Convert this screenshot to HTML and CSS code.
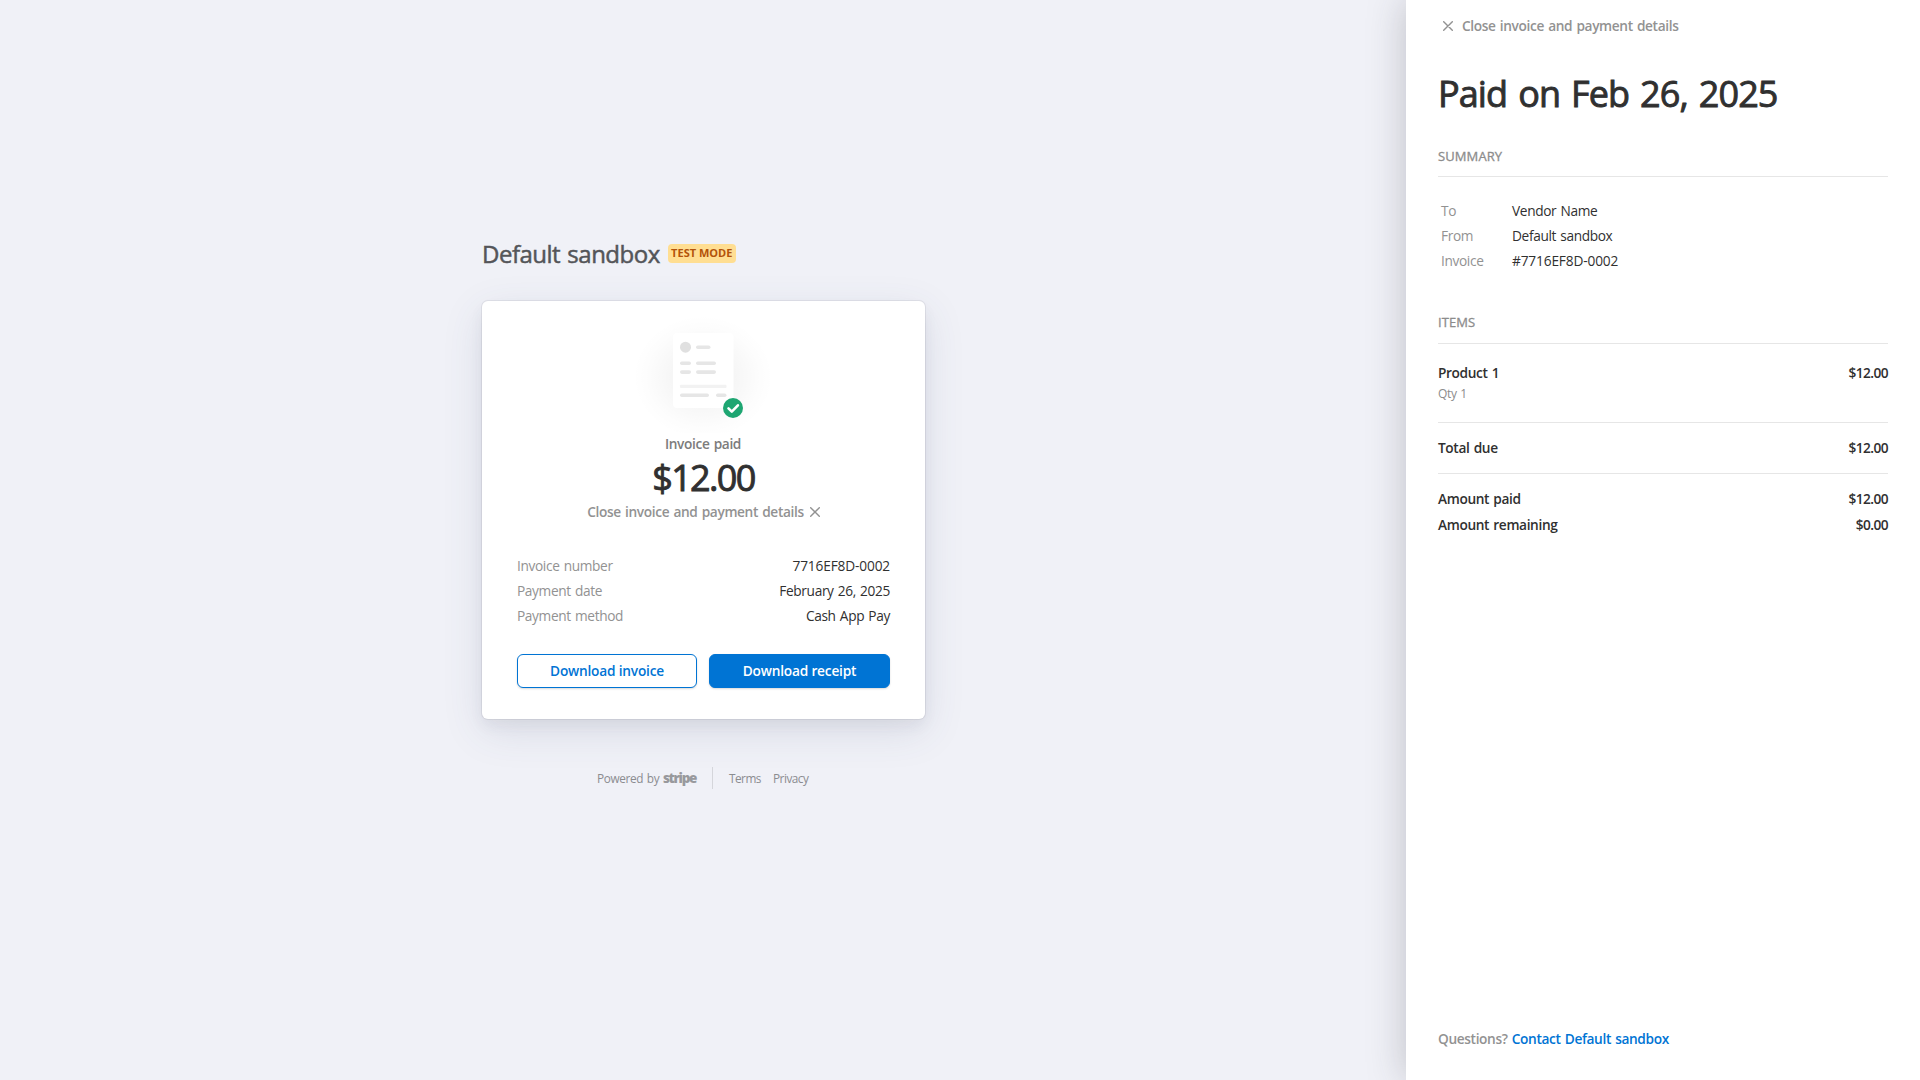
FILE: index.html
```html
<!DOCTYPE html>
<html lang="en">
<head>
<meta charset="utf-8">
<title>Invoice paid</title>
<link rel="stylesheet" href="styles.css">
</head>
<body>
<div class="page">
  <main class="main">
    <header class="brand">
      <h1 class="brand-name">Default sandbox</h1>
      <span class="badge">TEST MODE</span>
    </header>
    <section class="card">
      <svg class="illustration" width="151" height="120" viewBox="0 0 151 120">
        <defs>
          <radialGradient id="glow"><stop offset="0" stop-color="#000" stop-opacity=".07"/><stop offset=".5" stop-color="#000" stop-opacity=".032"/><stop offset=".8" stop-color="#000" stop-opacity=".01"/><stop offset="1" stop-color="#000" stop-opacity="0"/></radialGradient>
        </defs>
        <ellipse cx="75" cy="64" rx="70" ry="62" fill="url(#glow)"/>
        <rect x="45" y="20" width="60.500" height="75" rx="4" fill="#fff"/>
        <circle cx="57.500" cy="34.200" r="5.500" fill="#e0e0e0"/>
        <g fill="#e6e6e6">
          <rect x="68" y="32.500" width="14.500" height="3.600" rx="1.800"/>
          <rect x="52" y="48.500" width="11" height="3.600" rx="1.800"/>
          <rect x="68" y="48.500" width="20" height="3.600" rx="1.800"/>
          <rect x="52" y="57.300" width="11" height="3.600" rx="1.800"/>
          <rect x="68" y="57.300" width="20" height="3.600" rx="1.800"/>
          <rect x="52" y="80.500" width="29" height="3.600" rx="1.800"/>
          <rect x="88" y="80.500" width="10.500" height="3.600" rx="1.800"/>
        </g>
        <rect x="52" y="71.700" width="46.500" height="3.400" rx="1" fill="#f2f2f2"/>
        <circle cx="105" cy="95" r="10" fill="#1ea672"/>
        <path d="M100.500 95.300l3.300 3.300 6.100-6.300" fill="none" stroke="#fff" stroke-width="2.600" stroke-linecap="round" stroke-linejoin="round"/>
      </svg>
      <div class="status">Invoice paid</div>
      <div class="amount">$12.00</div>
      <a class="close-link"><span>Close invoice and payment details</span>
        <svg width="10" height="10" viewBox="0 0 10 10"><path d="M.7.7l8.600 8.600M9.300.7L.7 9.300" stroke="currentColor" stroke-width="1.400" stroke-linecap="round"/></svg>
      </a>
      <dl class="facts">
        <div class="fact"><dt>Invoice number</dt><dd class="code">7716EF8D-0002</dd></div>
        <div class="fact"><dt>Payment date</dt><dd>February 26, 2025</dd></div>
        <div class="fact"><dt>Payment method</dt><dd>Cash App Pay</dd></div>
      </dl>
      <div class="actions">
        <button class="button button-outline">Download invoice</button>
        <button class="button button-primary">Download receipt</button>
      </div>
    </section>
    <footer class="footer">
      <span class="powered">Powered by <b class="stripe">stripe</b></span>
      <span class="links"><a>Terms</a><a>Privacy</a></span>
    </footer>
  </main>
  <aside class="panel">
    <a class="panel-close">
      <svg width="10" height="10" viewBox="0 0 10 10"><path d="M.7.7l8.600 8.600M9.300.7L.7 9.300" stroke="currentColor" stroke-width="1.400" stroke-linecap="round"/></svg>
      <span>Close invoice and payment details</span>
    </a>
    <h2 class="panel-title">Paid on Feb 26, 2025</h2>
    <h3 class="section-title">SUMMARY</h3>
    <dl class="summary">
      <dt>To</dt><dd>Vendor Name</dd>
      <dt>From</dt><dd>Default sandbox</dd>
      <dt>Invoice</dt><dd class="code">#7716EF8D-0002</dd>
    </dl>
    <h3 class="section-title items-title">ITEMS</h3>
    <div class="item">
      <div class="line"><span>Product 1</span><span class="price">$12.00</span></div>
      <div class="quantity">Qty 1</div>
    </div>
    <div class="line total"><span>Total due</span><span class="price">$12.00</span></div>
    <div class="line paid"><span>Amount paid</span><span class="price">$12.00</span></div>
    <div class="line remaining"><span>Amount remaining</span><span class="price">$0.00</span></div>
    <div class="contact">Questions? <a>Contact Default sandbox</a></div>
  </aside>
</div>
</body>
</html>
```
FILE: styles.css
```css
* { box-sizing: border-box; }
body, h1, h2, h3, dl, dd { margin: 0; font-weight: 400; }
body {
  font-family: "Open Sans", "Noto Sans", sans-serif;
  font-size: 13.7px;
  letter-spacing: -.36px;
  word-spacing: 1px;
  color: #303030;
  background: #f0f1f7;
}
.page { display: flex; height: 1080px; overflow: hidden; }
.main { flex: 1; padding: 238px 0 0 482px; }
.brand { display: flex; align-items: center; gap: 8px; height: 32px; margin-bottom: 31px; }
.brand-name { font-size: 24px; line-height: 32px; letter-spacing: -.5px; word-spacing: 1.500px; color: #545559; -webkit-text-stroke: .5px; }
.badge { width: 68px; height: 19px; margin-top: -1px; line-height: 18px; border-radius: 4px; text-align: center; background: #ffde92; color: #b35309; font-size: 11px; font-weight: 700; letter-spacing: 0; word-spacing: 0; white-space: nowrap; }
.card {
  display: flex; flex-direction: column; align-items: center;
  width: 443px; height: 418px; padding: 12px 35px 0;
  border-radius: 6px; background: #fff;
  box-shadow: 0 0 0 1px rgba(48,49,61,.08), 0 7px 14px rgba(60,66,87,.06), 0 12px 40px rgba(60,76,117,.13);
}
.status { line-height: 20px; margin: 1px 1px 2px 0; font-weight: 600; color: #7c7c7c; }
.amount { font-size: 36px; line-height: 44px; letter-spacing: -1.650px; -webkit-text-stroke: .9px; }
.close-link, .panel-close { display: flex; align-items: center; line-height: 20px; font-weight: 600; color: #929292; }
.close-link { gap: 6px; margin-top: 2px; }
.facts { width: 100%; margin-top: 31px; }
.fact { display: flex; justify-content: space-between; line-height: 25px; }
dt { color: #929292; }
.code { letter-spacing: -.15px; }
.actions { display: flex; gap: 12px; width: 100%; margin-top: 26px; }
.button { width: 180px; height: 34px; padding: 0 0 1px; border: 1px solid #0074d4; border-radius: 6px; font: inherit; font-weight: 600; letter-spacing: -.2px; box-shadow: 0 1px 2px rgba(0,0,0,.15); }
.button-outline { background: #fff; color: #0074d4; }
.button-primary { width: 181px; background: #0074d4; color: #fff; }
.footer { display: flex; width: 443px; margin-top: 48px; padding-left: 115px; line-height: 23px; font-size: 11.800px; letter-spacing: -.36px; color: #8b8c90; }
.powered { width: 116px; height: 22px; border-right: 1px solid #d5d6db; white-space: nowrap; }
.stripe { font-size: 13.500px; font-weight: 800; letter-spacing: -1.280px; color: #98999d; }
.links { display: flex; gap: 12px; padding-left: 16px; letter-spacing: -.5px; }
.panel { display: flex; flex-direction: column; width: 514px; padding: 16px 32px 28px; background: #fff; box-shadow: 0 0 36px rgba(48,49,61,.25); }
.panel-close { gap: 9px; padding-left: 5px; }
.panel-title { margin-top: 35px; font-size: 36px; line-height: 46px; letter-spacing: -.9px; word-spacing: 2.500px; -webkit-text-stroke: .9px; }
.section-title { margin-top: 29px; padding-bottom: 10px; border-bottom: 1px solid #e6e6e6; font-size: 13px; line-height: 20px; letter-spacing: .1px; color: #8c8c8c; -webkit-text-stroke: .3px; }
.items-title { margin-top: 39px; padding-bottom: 11px; }
.summary { display: grid; grid-template-columns: 71px 1fr; padding: 21px 3px 0; line-height: 25px; }
.item { padding: 19px 0; border-bottom: 1px solid #e6e6e6; }
.line { display: flex; justify-content: space-between; line-height: 20px; font-weight: 600; }
.price { letter-spacing: -.58px; }
.quantity { position: relative; top: 1px; line-height: 20px; font-size: 12px; color: #8c8c8c; }
.total { padding: 15px 0; border-bottom: 1px solid #e6e6e6; }
.paid { margin-top: 15px; }
.remaining { margin-top: 6px; }
.contact { margin-top: auto; line-height: 26px; font-weight: 600; color: #929292; }
.contact a { color: #0074d4; }
```
